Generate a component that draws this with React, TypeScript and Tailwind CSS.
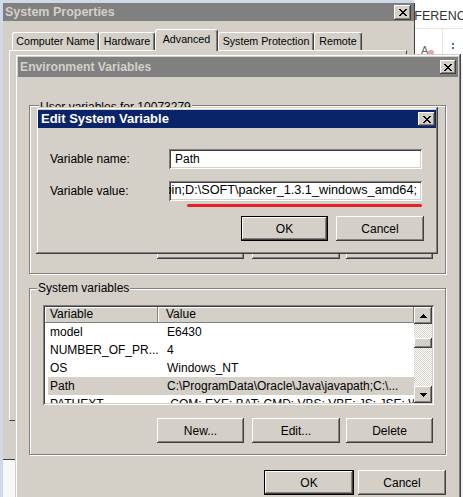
import React from 'react';

// classic 3D bevels
const RAISED =
  'shadow-[inset_-1px_-1px_0_#404040,inset_1px_1px_0_#ffffff,inset_-2px_-2px_0_#808080,inset_2px_2px_0_#d4d0c8]';
const FRAME =
  'shadow-[inset_-1px_-1px_0_#404040,inset_1px_1px_0_#d4d0c8,inset_-2px_-2px_0_#808080,inset_2px_2px_0_#ffffff]';
const SUNKEN =
  'shadow-[inset_1px_1px_0_#808080,inset_-1px_-1px_0_#ffffff,inset_2px_2px_0_#404040,inset_-2px_-2px_0_#d4d0c8]';
const ETCHED = 'border border-[#808080] shadow-[1px_1px_0_#ffffff,inset_1px_1px_0_#ffffff]';

const ROWS: [string, string][] = [
  ['model', 'E6430'],
  ['NUMBER_OF_PR...', '4'],
  ['OS', 'Windows_NT'],
  ['Path', 'C:\\ProgramData\\Oracle\\Java\\javapath;C:\\...'],
  ['PATHEXT', '.COM;.EXE;.BAT;.CMD;.VBS;.VBE;.JS;.JSE;.WSF'],
];

// pixel X used on the caption buttons
function CloseGlyph() {
  const rows = [[0, 6], [1, 5], [2, 4], [3, 3], [2, 4], [1, 5], [0, 6]];
  return (
    <svg width="8" height="7" viewBox="0 0 8 7" shapeRendering="crispEdges">
      {rows.map(([a, b], y) => (
        <g key={y}>
          <rect x={a} y={y} width="2" height="1" fill="#000" />
          <rect x={b} y={y} width="2" height="1" fill="#000" />
        </g>
      ))}
    </svg>
  );
}

function CloseButton({ className }: { className: string }) {
  return (
    <div className={`flex shrink-0 items-center justify-center bg-[#d4d0c8] ${RAISED} ${className}`}>
      <CloseGlyph />
    </div>
  );
}

function Button({ label, className, isDefault }: { label: string; className: string; isDefault?: boolean }) {
  return (
    <div
      className={`flex h-[25px] shrink-0 items-center justify-center bg-[#d4d0c8] text-[12px] text-black ${
        isDefault ? 'border border-black' : ''
      } ${className}`}
    >
      <div className={`flex h-full w-full items-center justify-center ${RAISED}`}>{label}</div>
    </div>
  );
}

function Tab({ label, className, selected }: { label: string; className: string; selected?: boolean }) {
  return (
    <div
      className={`flex shrink-0 items-center justify-center rounded-t-[3px] border-l border-t border-white border-r border-r-[#404040] bg-[#d4d0c8] text-[10.7px] text-black shadow-[inset_-1px_0_0_#808080] ${
        selected ? 'relative z-10 -mb-[1px] h-[22px] pb-[2px]' : 'h-[18px]'
      } ${className}`}
    >
      {label}
    </div>
  );
}

function Arrow({ up }: { up?: boolean }) {
  return (
    <svg width="7" height="4" viewBox="0 0 7 4" shapeRendering="crispEdges">
      <polygon points={up ? '3.5,0 7,4 0,4' : '0,0 7,0 3.5,4'} fill="#000" />
    </svg>
  );
}

function Scrollbar() {
  return (
    <div className="flex w-[18px] shrink-0 flex-col">
      <div className={`flex h-[17px] items-center justify-center bg-[#d4d0c8] ${RAISED}`}>
        <Arrow up />
      </div>
      <div className="flex-1 bg-[repeating-conic-gradient(#ffffff_0_25%,#d4d0c8_0_50%)] [background-size:2px_2px] pt-[14px]">
        <div className={`h-[10px] bg-[#d4d0c8] ${RAISED}`} />
      </div>
      <div className={`flex h-[17px] items-center justify-center bg-[#d4d0c8] ${RAISED}`}>
        <Arrow />
      </div>
    </div>
  );
}

function ListView() {
  return (
    <div className={`ml-[13px] mr-[11px] flex h-[100px] bg-white p-[2px] ${SUNKEN}`}>
      <div className="flex min-w-0 flex-1 flex-col overflow-hidden">
        <div className="flex h-[16px] shrink-0 text-[12px] leading-[15px] text-black">
          <div className="w-[113px] shrink-0 bg-[#d4d0c8] pl-[5px] shadow-[inset_-1px_-1px_0_#808080,inset_1px_1px_0_#ffffff]">
            Variable
          </div>
          <div className="flex-1 bg-[#d4d0c8] pl-[8px] shadow-[inset_-1px_-1px_0_#808080,inset_1px_1px_0_#ffffff]">
            Value
          </div>
        </div>
        {ROWS.map(([name, value]) => (
          <div
            key={name}
            className={`ml-[3px] flex h-[18px] shrink-0 items-center whitespace-nowrap text-[12px] text-black ${
              name === 'Path' ? 'bg-[#d4d0c8]' : ''
            }`}
          >
            <div className="w-[110px] shrink-0 pl-[2px]">{name}</div>
            <div className="pl-[9px]">{value}</div>
          </div>
        ))}
      </div>
      <Scrollbar />
    </div>
  );
}

function ButtonRow() {
  return (
    <div className="ml-[127px] flex">
      <Button label="New..." className="w-[87px]" />
      <Button label="Edit..." className="ml-[8px] w-[88px]" />
      <Button label="Delete" className="ml-[6px] w-[87px]" />
    </div>
  );
}

export default function App() {
  return (
    <div className="relative h-[497px] w-[463px] overflow-hidden bg-[#cfd9e8] font-['Liberation_Sans',Arial,sans-serif]">
      {/* document window behind, on the right */}
      <div className="absolute left-[414px] top-0 h-[497px] w-[49px] overflow-hidden bg-[#f4f4f4]">
        <div className="h-[60px] bg-white">
          <div className="-ml-[17px] pt-[8px] whitespace-nowrap text-[12.5px] leading-[16px] text-[#333]">REFERENCES</div>
          <div className="mt-[4px] h-px w-full bg-[#e3e3e3]" />
          <div className="flex h-[30px]">
            <div className="flex w-[28px] items-end pb-[3px] pl-[7px]">
              <span className="text-[11px] leading-[11px] text-[#666]">A</span>
              <span className="mb-[1px] h-[5px] w-[6px] rounded-full bg-[#e8a0b4]" />
            </div>
            <div className="w-px bg-[#e3e3e3]" />
            <div className="flex flex-col gap-[2px] pl-[9px] pt-[14px]">
              <span className="h-[2px] w-[2px] bg-[#3a6fc8]" />
              <span className="h-[2px] w-[2px] bg-[#3a6fc8]" />
            </div>
          </div>
        </div>
      </div>

      {/* System Properties */}
      <div className="absolute left-[3px] top-[3px] h-[457px] w-[412px] border-b border-r border-[#404040] bg-[#d4d0c8]">
        <div className="flex h-[18px] items-center justify-between bg-[#808080] pl-[2px] pr-[3px]">
          <span className="text-[12.5px] font-bold text-[#d4d0c8]">System Properties</span>
          <CloseButton className="h-[15px] w-[17px]" />
        </div>
        <div className="pl-[6px] pt-[8px]">
          <div className="ml-[3px] flex h-[21px] items-end">
            <Tab label="Computer Name" className="w-[87px]" />
            <Tab label="Hardware" className="w-[56px]" />
            <Tab label="Advanced" className="w-[63px]" selected />
            <Tab label="System Protection" className="w-[96px]" />
            <Tab label="Remote" className="w-[48px]" />
          </div>
          <div className="h-[371px] w-[398px] border-l border-t border-white border-b border-r border-b-[#404040] border-r-[#404040]" />
        </div>
      </div>
      <div className="absolute left-[3px] top-[460px] h-[37px] w-[14px] bg-[#f8f8f8]" />

      {/* Environment Variables */}
      <div className={`absolute left-[15px] top-[54px] h-[460px] w-[446px] bg-[#d4d0c8] p-[3px] ${FRAME}`}>
        <div className="flex h-[20px] items-center justify-between bg-[#808080] pl-[2px] pr-[2px]">
          <span className="text-[12.2px] font-bold text-[#d4d0c8]">Environment Variables</span>
          <CloseButton className="h-[14px] w-[16px]" />
        </div>
        <div className="pl-[11px] pr-[12px] pt-[28px] text-[12px] text-black">
          <div className={`flex h-[169px] flex-col ${ETCHED}`}>
            <div className="-mt-[6px] ml-[9px] h-[14px] w-fit bg-[#d4d0c8] px-[1px] leading-[14px]">
              User variables for 10073279
            </div>
            <div className="mt-auto pb-[14px]">
              <ButtonRow />
            </div>
          </div>

          <div className={`mt-[14px] flex flex-col pb-[11px] ${ETCHED}`}>
            <div className="-mt-[8px] ml-[7px] h-[14px] w-fit bg-[#d4d0c8] px-[1px] leading-[14px]">
              System variables
            </div>
            <div className="mt-[10px]">
              <ListView />
            </div>
            <div className="mt-[13px]">
              <ButtonRow />
            </div>
          </div>

          <div className="mt-[15px] flex justify-end">
            <Button label="OK" className="w-[90px]" isDefault />
            <Button label="Cancel" className="ml-[4px] w-[88px]" />
          </div>
        </div>
      </div>

      {/* Edit System Variable */}
      <div className={`absolute left-[36px] top-[107px] h-[147px] w-[402px] bg-[#d4d0c8] px-[2px] pb-[2px] pt-[3px] ${FRAME}`}>
        <div className="flex h-[18px] items-center justify-between bg-[#0a246a] pl-[3px] pr-[1px]">
          <span className="text-[13px] font-bold text-white">Edit System Variable</span>
          <CloseButton className="h-[14px] w-[17px]" />
        </div>
        <div className="flex flex-col pl-[12px] pr-[14px] pt-[21px] text-[12px] text-black">
          <div className="flex h-[20px] items-center">
            <div className="w-[119px] shrink-0">Variable name:</div>
            <div className={`flex h-[20px] w-[253px] items-center bg-white pl-[6px] ${SUNKEN}`}>Path</div>
          </div>
          <div className="mt-[12px] flex h-[20px] items-center">
            <div className="w-[119px] shrink-0">Variable value:</div>
            <div className={`flex h-[20px] w-[253px] items-center justify-end overflow-hidden whitespace-nowrap bg-white pr-[5px] text-[12.7px] ${SUNKEN}`}>
              {'bin;D:\\SOFT\\packer_1.3.1_windows_amd64;'}
            </div>
          </div>
          <div className="mt-[3px] h-[3px] w-[235px] self-end rounded-full bg-[#e3202b]" />
          <div className="-mr-[2px] mt-[9px] flex justify-end">
            <Button label="OK" className="w-[87px]" isDefault />
            <Button label="Cancel" className="ml-[8px] w-[88px]" />
          </div>
        </div>
      </div>
    </div>
  );
}
